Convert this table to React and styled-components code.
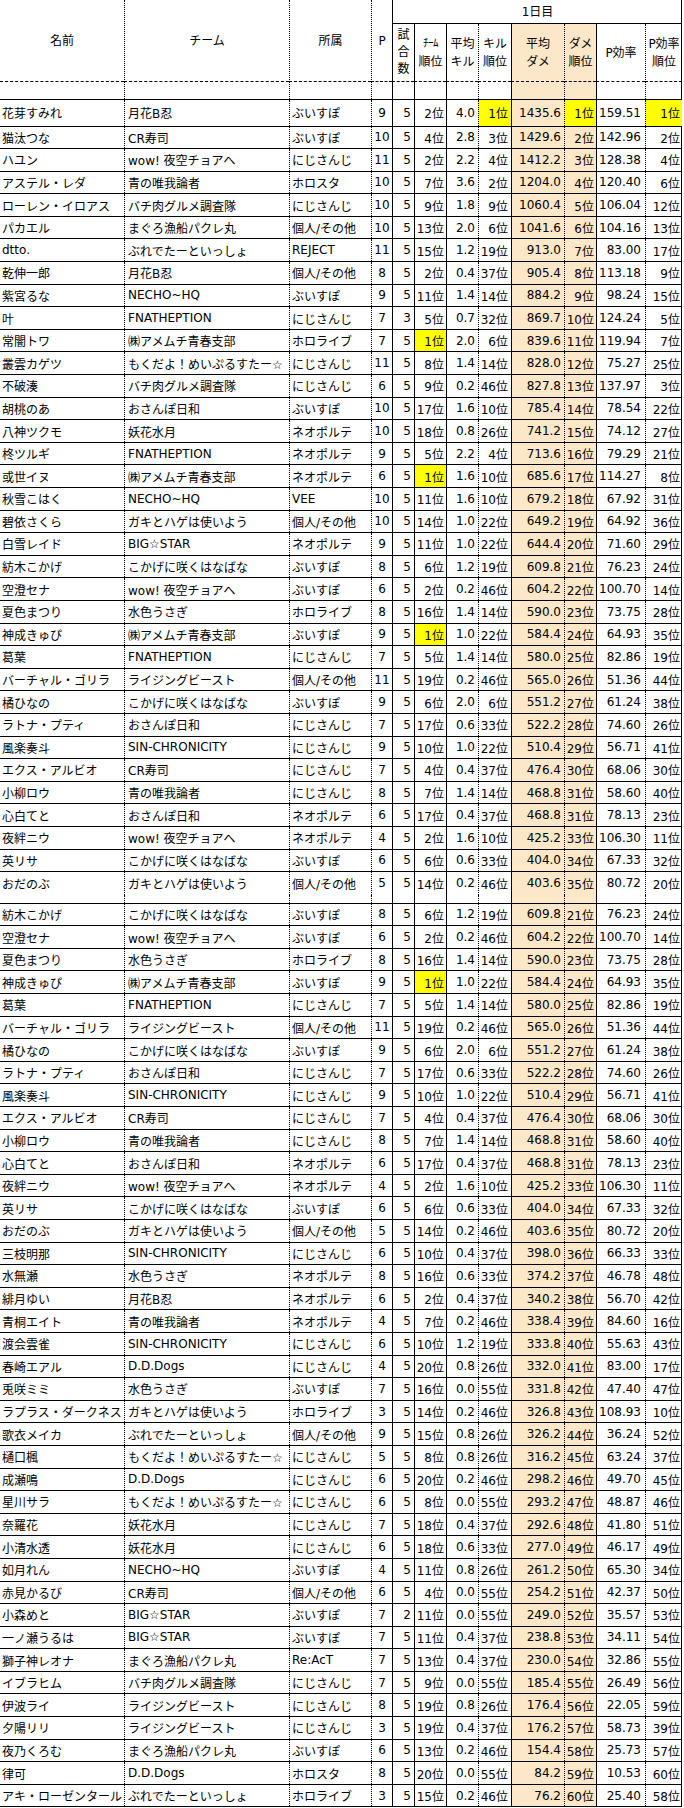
import React from 'react'
import styled, { createGlobalStyle } from 'styled-components'

const COLS = '124px 165px 82px 21px 22px 32px 32px 33px 53px 32px 49px 37px'
const TAN = '#fce7c8'
const ROW_H = 22.6

const GlobalStyle = createGlobalStyle`
  html, body {
    margin: 0;
    padding: 0;
    background: #fff;
  }
  body {
    font-family: "DejaVu Sans", "Noto Sans CJK JP", sans-serif;
    font-size: 12px;
    color: #000;
  }
`

const Sheet = styled.div`
  width: 682px;
  display: flex;
  flex-direction: column;
`

const Head = styled.div`
  display: grid;
  grid-template-columns: ${COLS};
  grid-template-rows: 24px 58px;
  box-sizing: border-box;
  border-right: 1px solid #000;
`

const HeadCell = styled.div`
  grid-column: ${p => p.$col};
  grid-row: ${p => p.$row};
  box-sizing: border-box;
  display: flex;
  align-items: center;
  justify-content: center;
  text-align: center;
  line-height: 18px;
  white-space: nowrap;
  border-left: ${p => (p.$line ? `1px ${p.$line} #000` : 'none')};
  border-bottom: 1px ${p => p.$bottom || 'dashed'} #000;
  background: ${p => (p.$tan ? TAN : 'transparent')};
`

const Stack = styled.span`
  line-height: 17px;
`

const Tiny = styled.span`
  font-size: 11px;
  letter-spacing: -0.5px;
`

const Row = styled.div`
  display: grid;
  grid-template-columns: ${COLS};
  height: ${p => p.$h}px;
  box-sizing: border-box;
  border-right: 1px solid #000;
  border-bottom: ${p => (p.$open ? 'none' : '1px solid #000')};
  overflow: ${p => (p.$clip ? 'hidden' : 'visible')};
`

const Cell = styled.div`
  box-sizing: border-box;
  height: 100%;
  display: flex;
  align-items: ${p => (p.$clip ? 'flex-start' : 'center')};
  justify-content: ${p =>
    p.$align === 'right' ? 'flex-end' : p.$align === 'center' ? 'center' : 'flex-start'};
  padding: ${p => (p.$align === 'right' ? `0 ${p.$pad}px 0 0` : `0 0 0 ${p.$pad || 0}px`)};
  white-space: nowrap;
  border-left: ${p => (p.$line ? `1px ${p.$line} #000` : 'none')};
  background: ${p => (p.$hl ? '#ffff00' : p.$tan ? TAN : 'transparent')};
`

const Clipped = styled.span`
  margin-top: -15px;
  line-height: 17px;
`

const columns = [
  { line: null, align: 'left', pad: 2 },
  { line: 'dotted', align: 'left', pad: 3 },
  { line: 'dotted', align: 'left', pad: 2 },
  { line: 'dotted', align: 'center' },
  { line: 'solid', align: 'right', pad: 3 },
  { line: 'solid', align: 'right', pad: 2 },
  { line: 'solid', align: 'right', pad: 3 },
  { line: 'dotted', align: 'right', pad: 3 },
  { line: 'solid', align: 'right', pad: 3, tan: true },
  { line: 'dotted', align: 'right', pad: 2, tan: true },
  { line: 'solid', align: 'right', pad: 4 },
  { line: 'dotted', align: 'right', pad: 2 },
]

// name, team, aff, P, games, teamRank, avgKill, killRank, avgDmg, dmgRank, pEff, pEffRank, highlighted cols
const top = [
  ['花芽すみれ', '月花B忍', 'ぶいすぽ', '9', '5', '2位', '4.0', '1位', '1435.6', '1位', '159.51', '1位', [7, 9, 11]],
  ['猫汰つな', 'CR寿司', 'ぶいすぽ', '10', '5', '4位', '2.8', '3位', '1429.6', '2位', '142.96', '2位'],
  ['ハユン', 'wow! 夜空チョアへ', 'にじさんじ', '11', '5', '2位', '2.2', '4位', '1412.2', '3位', '128.38', '4位'],
  ['アステル・レダ', '青の唯我論者', 'ホロスタ', '10', '5', '7位', '3.6', '2位', '1204.0', '4位', '120.40', '6位'],
  ['ローレン・イロアス', 'バチ肉グルメ調査隊', 'にじさんじ', '10', '5', '9位', '1.8', '9位', '1060.4', '5位', '106.04', '12位'],
  ['パカエル', 'まぐろ漁船パクレ丸', '個人/その他', '10', '5', '13位', '2.0', '6位', '1041.6', '6位', '104.16', '13位'],
  ['dtto.', 'ぶれでたーといっしょ', 'REJECT', '11', '5', '15位', '1.2', '19位', '913.0', '7位', '83.00', '17位'],
  ['乾伸一郎', '月花B忍', '個人/その他', '8', '5', '2位', '0.4', '37位', '905.4', '8位', '113.18', '9位'],
  ['紫宮るな', 'NECHO~HQ', 'ぶいすぽ', '9', '5', '11位', '1.4', '14位', '884.2', '9位', '98.24', '15位'],
  ['叶', 'FNATHEPTION', 'にじさんじ', '7', '3', '5位', '0.7', '32位', '869.7', '10位', '124.24', '5位'],
  ['常闇トワ', '㈱アメムチ青春支部', 'ホロライブ', '7', '5', '1位', '2.0', '6位', '839.6', '11位', '119.94', '7位', [5]],
  ['叢雲カゲツ', 'もくだよ！めいぷるすたー☆', 'にじさんじ', '11', '5', '8位', '1.4', '14位', '828.0', '12位', '75.27', '25位'],
  ['不破湊', 'バチ肉グルメ調査隊', 'にじさんじ', '6', '5', '9位', '0.2', '46位', '827.8', '13位', '137.97', '3位'],
  ['胡桃のあ', 'おさんぽ日和', 'ぶいすぽ', '10', '5', '17位', '1.6', '10位', '785.4', '14位', '78.54', '22位'],
  ['八神ツクモ', '妖花水月', 'ネオポルテ', '10', '5', '18位', '0.8', '26位', '741.2', '15位', '74.12', '27位'],
  ['柊ツルギ', 'FNATHEPTION', 'ネオポルテ', '9', '5', '5位', '2.2', '4位', '713.6', '16位', '79.29', '21位'],
  ['或世イヌ', '㈱アメムチ青春支部', 'ネオポルテ', '6', '5', '1位', '1.6', '10位', '685.6', '17位', '114.27', '8位', [5]],
  ['秋雪こはく', 'NECHO~HQ', 'VEE', '10', '5', '11位', '1.6', '10位', '679.2', '18位', '67.92', '31位'],
  ['碧依さくら', 'ガキとハゲは使いよう', '個人/その他', '10', '5', '14位', '1.0', '22位', '649.2', '19位', '64.92', '36位'],
  ['白雪レイド', 'BIG☆STAR', 'ネオポルテ', '9', '5', '11位', '1.0', '22位', '644.4', '20位', '71.60', '29位'],
]

const repeated = [
  ['紡木こかげ', 'こかげに咲くはなばな', 'ぶいすぽ', '8', '5', '6位', '1.2', '19位', '609.8', '21位', '76.23', '24位'],
  ['空澄セナ', 'wow! 夜空チョアへ', 'ぶいすぽ', '6', '5', '2位', '0.2', '46位', '604.2', '22位', '100.70', '14位'],
  ['夏色まつり', '水色うさぎ', 'ホロライブ', '8', '5', '16位', '1.4', '14位', '590.0', '23位', '73.75', '28位'],
  ['神成きゅぴ', '㈱アメムチ青春支部', 'ぶいすぽ', '9', '5', '1位', '1.0', '22位', '584.4', '24位', '64.93', '35位', [5]],
  ['葛葉', 'FNATHEPTION', 'にじさんじ', '7', '5', '5位', '1.4', '14位', '580.0', '25位', '82.86', '19位'],
  ['バーチャル・ゴリラ', 'ライジングビースト', '個人/その他', '11', '5', '19位', '0.2', '46位', '565.0', '26位', '51.36', '44位'],
  ['橘ひなの', 'こかげに咲くはなばな', 'ぶいすぽ', '9', '5', '6位', '2.0', '6位', '551.2', '27位', '61.24', '38位'],
  ['ラトナ・プティ', 'おさんぽ日和', 'にじさんじ', '7', '5', '17位', '0.6', '33位', '522.2', '28位', '74.60', '26位'],
  ['風楽奏斗', 'SIN-CHRONICITY', 'にじさんじ', '9', '5', '10位', '1.0', '22位', '510.4', '29位', '56.71', '41位'],
  ['エクス・アルビオ', 'CR寿司', 'にじさんじ', '7', '5', '4位', '0.4', '37位', '476.4', '30位', '68.06', '30位'],
  ['小柳ロウ', '青の唯我論者', 'にじさんじ', '8', '5', '7位', '1.4', '14位', '468.8', '31位', '58.60', '40位'],
  ['心白てと', 'おさんぽ日和', 'ネオポルテ', '6', '5', '17位', '0.4', '37位', '468.8', '31位', '78.13', '23位'],
  ['夜絆ニウ', 'wow! 夜空チョアへ', 'ネオポルテ', '4', '5', '2位', '1.6', '10位', '425.2', '33位', '106.30', '11位'],
  ['英リサ', 'こかげに咲くはなばな', 'ぶいすぽ', '6', '5', '6位', '0.6', '33位', '404.0', '34位', '67.33', '32位'],
]

const odanobu = ['おだのぶ', 'ガキとハゲは使いよう', '個人/その他', '5', '5', '14位', '0.2', '46位', '403.6', '35位', '80.72', '20位']

const bottom = [
  ['三枝明那', 'SIN-CHRONICITY', 'にじさんじ', '6', '5', '10位', '0.4', '37位', '398.0', '36位', '66.33', '33位'],
  ['水無瀬', '水色うさぎ', 'ネオポルテ', '8', '5', '16位', '0.6', '33位', '374.2', '37位', '46.78', '48位'],
  ['緋月ゆい', '月花B忍', 'ネオポルテ', '6', '5', '2位', '0.4', '37位', '340.2', '38位', '56.70', '42位'],
  ['青桐エイト', '青の唯我論者', 'ネオポルテ', '4', '5', '7位', '0.2', '46位', '338.4', '39位', '84.60', '16位'],
  ['渡会雲雀', 'SIN-CHRONICITY', 'にじさんじ', '6', '5', '10位', '1.2', '19位', '333.8', '40位', '55.63', '43位'],
  ['春崎エアル', 'D.D.Dogs', 'にじさんじ', '4', '5', '20位', '0.8', '26位', '332.0', '41位', '83.00', '17位'],
  ['兎咲ミミ', '水色うさぎ', 'ぶいすぽ', '7', '5', '16位', '0.0', '55位', '331.8', '42位', '47.40', '47位'],
  ['ラプラス・ダークネス', 'ガキとハゲは使いよう', 'ホロライブ', '3', '5', '14位', '0.2', '46位', '326.8', '43位', '108.93', '10位'],
  ['歌衣メイカ', 'ぶれでたーといっしょ', '個人/その他', '9', '5', '15位', '0.8', '26位', '326.2', '44位', '36.24', '52位'],
  ['樋口楓', 'もくだよ！めいぷるすたー☆', 'にじさんじ', '5', '5', '8位', '0.8', '26位', '316.2', '45位', '63.24', '37位'],
  ['成瀬鳴', 'D.D.Dogs', 'にじさんじ', '6', '5', '20位', '0.2', '46位', '298.2', '46位', '49.70', '45位'],
  ['星川サラ', 'もくだよ！めいぷるすたー☆', 'にじさんじ', '6', '5', '8位', '0.0', '55位', '293.2', '47位', '48.87', '46位'],
  ['奈羅花', '妖花水月', 'にじさんじ', '7', '5', '18位', '0.4', '37位', '292.6', '48位', '41.80', '51位'],
  ['小清水透', '妖花水月', 'にじさんじ', '6', '5', '18位', '0.6', '33位', '277.0', '49位', '46.17', '49位'],
  ['如月れん', 'NECHO~HQ', 'ぶいすぽ', '4', '5', '11位', '0.8', '26位', '261.2', '50位', '65.30', '34位'],
  ['赤見かるび', 'CR寿司', '個人/その他', '6', '5', '4位', '0.0', '55位', '254.2', '51位', '42.37', '50位'],
  ['小森めと', 'BIG☆STAR', 'ぶいすぽ', '7', '2', '11位', '0.0', '55位', '249.0', '52位', '35.57', '53位'],
  ['一ノ瀬うるは', 'BIG☆STAR', 'ぶいすぽ', '7', '5', '11位', '0.4', '37位', '238.8', '53位', '34.11', '54位'],
  ['獅子神レオナ', 'まぐろ漁船パクレ丸', 'Re:AcT', '7', '5', '13位', '0.4', '37位', '230.0', '54位', '32.86', '55位'],
  ['イブラヒム', 'バチ肉グルメ調査隊', 'にじさんじ', '7', '5', '9位', '0.0', '55位', '185.4', '55位', '26.49', '56位'],
  ['伊波ライ', 'ライジングビースト', 'にじさんじ', '8', '5', '19位', '0.8', '26位', '176.4', '56位', '22.05', '59位'],
  ['夕陽リリ', 'ライジングビースト', 'にじさんじ', '3', '5', '19位', '0.4', '37位', '176.2', '57位', '58.73', '39位'],
  ['夜乃くろむ', 'まぐろ漁船パクレ丸', 'ぶいすぽ', '6', '5', '13位', '0.2', '46位', '154.4', '58位', '25.73', '57位'],
  ['律可', 'D.D.Dogs', 'ホロスタ', '8', '5', '20位', '0.0', '55位', '84.2', '59位', '10.53', '60位'],
  ['アキ・ローゼンタール', 'ぶれでたーといっしょ', 'ホロライブ', '3', '5', '15位', '0.2', '46位', '76.2', '60位', '25.40', '58位'],
]

function DataRow({ data, h = ROW_H, open, clip }) {
  const hl = data[12] || []
  return (
    <Row $h={h} $open={open} $clip={clip}>
      {columns.map((c, i) => (
        <Cell
          key={i}
          $line={c.line}
          $align={c.align}
          $pad={c.pad}
          $tan={c.tan}
          $hl={hl.includes(i)}
          $clip={clip}
        >
          {clip ? <Clipped>{data[i]}</Clipped> : data[i]}
        </Cell>
      ))}
    </Row>
  )
}

const subHeads = [
  <Stack>試<br />合<br />数</Stack>,
  <span><Tiny>ﾁｰﾑ</Tiny><br />順位</span>,
  <span>平均<br />キル</span>,
  <span>キル<br />順位</span>,
  <span>平均<br />ダメ</span>,
  <span>ダメ<br />順位</span>,
  <span>P効率</span>,
  <span>P効率<br />順位</span>,
]

export default function App() {
  const empty = Array(12).fill('')
  return (
    <>
      <GlobalStyle />
      <Sheet>
        <Head>
          <HeadCell $col={1} $row="1 / 3">名前</HeadCell>
          <HeadCell $col={2} $row="1 / 3" $line="dotted">チーム</HeadCell>
          <HeadCell $col={3} $row="1 / 3" $line="dotted">所属</HeadCell>
          <HeadCell $col={4} $row="1 / 3" $line="dotted">P</HeadCell>
          <HeadCell $col="5 / 13" $row={1} $line="solid" $bottom="solid">1日目</HeadCell>
          {subHeads.map((label, i) => (
            <HeadCell
              key={i}
              $col={i + 5}
              $row={2}
              $line={columns[i + 4].line}
              $tan={columns[i + 4].tan}
            >
              {label}
            </HeadCell>
          ))}
        </Head>
        <DataRow data={empty} h={17.5} />
        <DataRow data={top[0]} h={27} />
        {top.slice(1).map((r, i) => <DataRow key={'t' + i} data={r} />)}
        {repeated.map((r, i) => <DataRow key={'a' + i} data={r} />)}
        <DataRow data={odanobu} open />
        <DataRow data={bottom[0]} h={9} clip />
        {repeated.map((r, i) => <DataRow key={'b' + i} data={r} />)}
        <DataRow data={odanobu} />
        {bottom.map((r, i) => <DataRow key={'c' + i} data={r} />)}
      </Sheet>
    </>
  )
}
